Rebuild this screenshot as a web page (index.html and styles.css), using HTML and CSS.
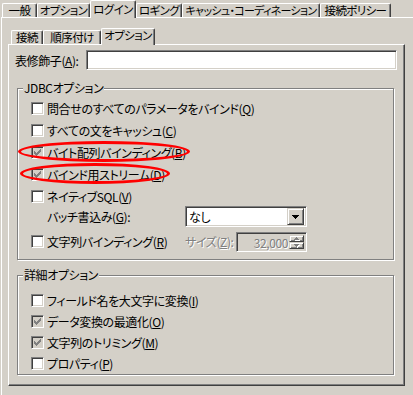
FILE: index.html
```html
<!DOCTYPE html>
<html lang="ja">
<head>
    <meta charset="UTF-8">
    <title>ログイン オプション</title>
    <link rel="stylesheet" href="styles.css">
</head>
<body>

<div class="dlg">
    <div class="tabs">
        <div class="tab" style="width:35px">一般</div>
        <div class="tab" style="width:53px">オプション</div>
        <div class="tab sel" style="width:46px">ログイン</div>
        <div class="tab" style="width:46px">ロギング</div>
        <div class="tab tab-long" style="width:138px">キャッシュ・コーディネーション</div>
        <div class="tab" style="width:71px">接続ポリシー</div>
    </div>

    <div class="outer">
        <div class="tabs sub-tabs">
            <div class="tab" style="width:32px">接続</div>
            <div class="tab" style="width:58px">順序付け</div>
            <div class="tab sel" style="width:54px">オプション</div>
        </div>

        <div class="inner">
            <div class="field-row">
                <span class="field-label">表修飾子(<u>A</u>):</span>
                <span class="edit"></span>
            </div>

            <fieldset class="group jdbc">
                <legend>JDBCオプション</legend>
                <div class="chk"><span class="cb"></span>問合せのすべてのパラメータをバインド(<u>Q</u>)</div>
                <div class="chk"><span class="cb"></span>すべての文をキャッシュ(<u>C</u>)</div>
                <div class="chk">
                    <span class="cb on"><svg width="11" height="11"><path d="M8 2h1v1h-1z M7 3h2v1h-2z M2 4h1v1h-1z M6 4h3v1h-3z M2 5h2v1h-2z M5 5h3v1h-3z M2 6h5v1h-5z M3 7h3v1h-3z M4 8h1v1h-1z"/></svg></span>バイト配列バインディング(<u>B</u>)
                    <span class="mark mark-1"></span>
                </div>
                <div class="chk">
                    <span class="cb on"><svg width="11" height="11"><path d="M8 2h1v1h-1z M7 3h2v1h-2z M2 4h1v1h-1z M6 4h3v1h-3z M2 5h2v1h-2z M5 5h3v1h-3z M2 6h5v1h-5z M3 7h3v1h-3z M4 8h1v1h-1z"/></svg></span>バインド用ストリーム(<u>D</u>)
                    <span class="mark mark-2"></span>
                </div>
                <div class="chk"><span class="cb"></span>ネイティブSQL(<u>V</u>)</div>
                <div class="batch-row">
                    <span class="batch-label">バッチ書込み(<u>G</u>):</span>
                    <span class="combo">
                        <span class="combo-val">なし</span>
                        <span class="btn3d combo-btn"><svg width="7" height="4"><path d="M0 0h7v1h-7z M1 1h5v1h-5z M2 2h3v1h-3z M3 3h1v1h-1z"/></svg></span>
                    </span>
                </div>
                <div class="chk size-row">
                    <span class="cb"></span><span class="size-text">文字列バインディング(<u>R</u>)</span>
                    <span class="disabled size-label">サイズ(<u>Z</u>):</span>
                    <span class="spin">
                        <span class="spin-val disabled">32,000</span>
                        <span class="spin-btns">
                            <span class="btn3d spin-btn"><svg width="5" height="3"><path d="M2 0h1v1h-1z M1 1h3v1h-3z M0 2h5v1h-5z"/></svg></span>
                            <span class="btn3d spin-btn"><svg width="5" height="3"><path d="M0 0h5v1h-5z M1 1h3v1h-3z M2 2h1v1h-1z"/></svg></span>
                        </span>
                    </span>
                </div>
            </fieldset>

            <fieldset class="group detail">
                <legend>詳細オプション</legend>
                <div class="chk"><span class="cb"></span>フィールド名を大文字に変換(<u>I</u>)</div>
                <div class="chk"><span class="cb on"><svg width="11" height="11"><path d="M8 2h1v1h-1z M7 3h2v1h-2z M2 4h1v1h-1z M6 4h3v1h-3z M2 5h2v1h-2z M5 5h3v1h-3z M2 6h5v1h-5z M3 7h3v1h-3z M4 8h1v1h-1z"/></svg></span>データ変換の最適化(<u>O</u>)</div>
                <div class="chk"><span class="cb on"><svg width="11" height="11"><path d="M8 2h1v1h-1z M7 3h2v1h-2z M2 4h1v1h-1z M6 4h3v1h-3z M2 5h2v1h-2z M5 5h3v1h-3z M2 6h5v1h-5z M3 7h3v1h-3z M4 8h1v1h-1z"/></svg></span>文字列のトリミング(<u>M</u>)</div>
                <div class="chk"><span class="cb"></span>プロパティ(<u>P</u>)</div>
            </fieldset>
        </div>
    </div>
</div>

</body>
</html>
```

FILE: styles.css
```css
body {
    margin: 0;
    background-color: #d4d0c8;
    font-family: "Noto Sans CJK JP", "Noto Sans", sans-serif;
    font-size: 12px;
    font-feature-settings: "palt";
    letter-spacing: -0.4px;
    color: #000;
    overflow: hidden;
}
u {
    text-decoration: underline;
}

.dlg {
    width: 430px;
    padding-left: 1px;
}

/* tab strips */
.tabs {
    display: flex;
    align-items: flex-end;
    height: 17px;
    padding-left: 1px;
}
.sub-tabs {
    height: 16px;
    margin-top: 10px;
    padding-left: 3px;
}
.tab {
    box-sizing: border-box;
    height: 14px;
    border: 1px solid #fff;
    border-bottom: none;
    border-right-color: #404040;
    border-radius: 2px 2px 0 0;
    box-shadow: inset -1px 0 #808080;
    font-size: 11.5px;
    letter-spacing: -0.6px;
    line-height: 13px;
    text-align: center;
    white-space: nowrap;
}
.tab-long {
    font-size: 11px;
    letter-spacing: -0.7px;
}
.tab.sel {
    position: relative;
    z-index: 1;
    height: 18px;
    margin-bottom: -1px;
    line-height: 16px;
    background-color: #d4d0c8;
}
.sub-tabs .tab.sel {
    height: 17px;
    line-height: 13px;
}

/* panels */
.outer {
    height: 377px;
    padding-left: 6px;
    border-top: 1px solid #fff;
    border-left: 1px solid #fff;
}
.inner {
    width: 395px;
    height: 340px;
    border: 1px solid;
    border-color: #fff #404040 #404040 #fff;
    box-shadow: inset -1px -1px #808080;
}

/* sunken edit */
.field-row {
    display: flex;
    align-items: center;
    height: 20px;
    margin-top: 5px;
}
.field-label {
    width: 71px;
    padding-left: 6px;
}
.edit, .combo, .spin {
    box-sizing: border-box;
    background-color: #fff;
    border: 1px solid;
    border-color: #808080 #fff #fff #808080;
    box-shadow: inset 1px 1px #404040, inset -1px -1px #d4d0c8;
}
.edit {
    width: 311px;
    height: 20px;
}

/* group boxes */
.group {
    box-sizing: border-box;
    width: 377px;
    min-inline-size: 0;
    margin: 0 0 0 8px;
    padding: 0 0 0 5px;
    border: 1px solid #808080;
    box-shadow: inset 1px 1px #fff, 1px 1px #fff;
}
.group legend {
    padding: 0 1px;
    line-height: 14px;
    background-color: #d4d0c8;
}
.jdbc {
    margin-top: 11px;
    padding-top: 2px;
    padding-bottom: 7px;
}
.detail {
    margin-top: 8px;
    padding-top: 8px;
}

.chk {
    position: relative;
    display: flex;
    align-items: center;
    height: 22px;
    margin-left: 8px;
    white-space: nowrap;
}
.detail .chk {
    height: 21px;
}
.cb {
    box-sizing: border-box;
    flex: none;
    width: 13px;
    height: 13px;
    margin-right: 3px;
    background-color: #fff;
    border: 1px solid;
    border-color: #808080 #fff #fff #808080;
    box-shadow: inset 1px 1px #404040, inset -1px -1px #d4d0c8;
}
.cb.on {
    background-color: #d4d0c8;
}
.cb svg {
    display: block;
    fill: #808080;
}

/* red annotation rings */
.mark {
    position: absolute;
    box-sizing: border-box;
    border: 3px solid #f00;
    border-radius: 50%;
}
.mark-1 {
    left: -13px;
    top: 0;
    width: 172px;
    height: 21px;
}
.mark-2 {
    left: -11px;
    top: 0;
    width: 150px;
    height: 21px;
}

/* batch combo */
.batch-row {
    display: flex;
    align-items: center;
    height: 21px;
    margin: -1px 0 0 24px;
}
.batch-label {
    width: 138px;
}
.combo {
    display: flex;
    align-items: center;
    width: 122px;
    height: 21px;
    padding: 2px;
}
.combo-val {
    flex: 1;
    padding-left: 1px;
}
.btn3d {
    box-sizing: border-box;
    display: flex;
    align-items: center;
    justify-content: center;
    background-color: #d4d0c8;
    border: 1px solid;
    border-color: #d4d0c8 #404040 #404040 #d4d0c8;
    box-shadow: inset 1px 1px #fff, inset -1px -1px #808080;
}
.combo-btn {
    width: 17px;
    height: 17px;
}
.combo-btn svg {
    fill: #000;
}

/* size spinner */
.size-row {
    height: 21px;
    margin-top: 4px;
}
.size-text {
    width: 138px;
}
.disabled {
    color: #808080;
    text-shadow: 1px 1px #fff;
}
.size-label {
    width: 51px;
}
.spin {
    display: flex;
    width: 71px;
    height: 20px;
    padding: 2px;
    background-color: #d4d0c8;
}
.spin-val {
    flex: 1;
    padding-right: 1px;
    line-height: 16px;
    text-align: right;
}
.spin-btns {
    display: flex;
    flex-direction: column;
    width: 15px;
}
.spin-btn {
    height: 8px;
}
.spin-btn svg {
    fill: #808080;
    filter: drop-shadow(1px 1px 0 #fff);
}
```
